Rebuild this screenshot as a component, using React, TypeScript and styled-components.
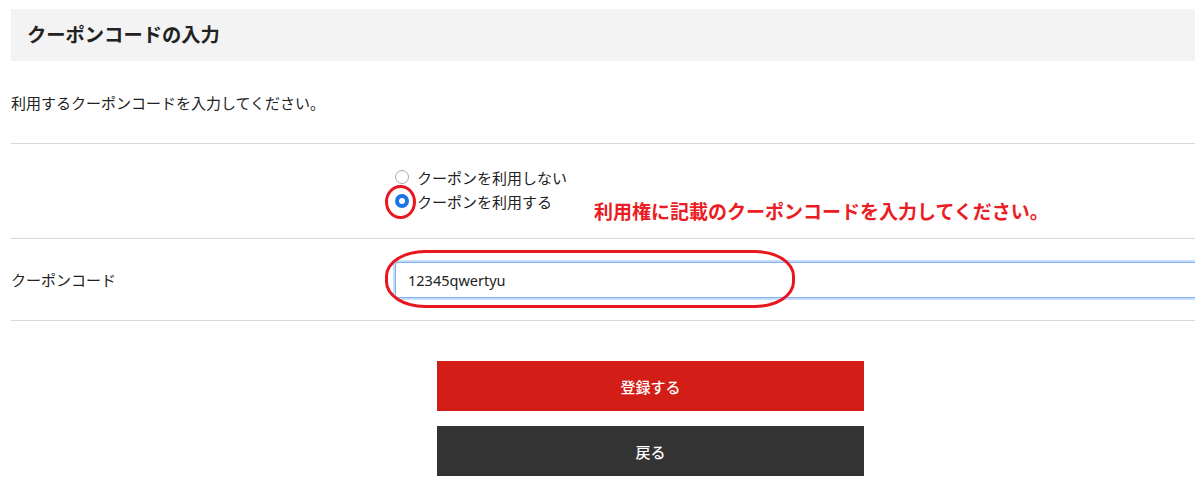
import React from "react";
import styled, { createGlobalStyle } from "styled-components";

const Global = createGlobalStyle`
  html, body { margin: 0; padding: 0; overflow: hidden; background: #fff; }
  body { font-family: "Noto Sans CJK JP", "Noto Sans", sans-serif; color: #222; }
`;

const Page = styled.div`
  width: 1279px;
  padding: 9px 0 0 11px;
`;

const Header = styled.div`
  height: 52px;
  background: #f3f3f3;
  display: flex;
  align-items: center;
  padding-left: 16px;
`;

const Title = styled.h2`
  margin: 0;
  font-size: 19.3px;
  font-weight: 700;
  color: #222;
  line-height: 1;
`;

const Desc = styled.p`
  margin: 30px 0 28px;
  font-size: 15px;
  line-height: 24px;
`;

const Table = styled.div`
  border-top: 1px solid #d9d9d9;
`;

const Row = styled.div<{ $pt: number; $pb: number }>`
  display: grid;
  grid-template-columns: 384px 1fr;
  align-items: center;
  padding: ${(p) => p.$pt}px 0 ${(p) => p.$pb}px;
  border-bottom: 1px solid #d9d9d9;
`;

const Label = styled.div`
  font-size: 15px;
  line-height: 24px;
`;

const Cell = styled.div`
  position: relative;
`;

const RadioLine = styled.label`
  display: flex;
  align-items: center;
  gap: 8px;
  height: 24px;
  font-size: 15px;
  cursor: pointer;
`;

const Radio = styled.input`
  appearance: none;
  margin: 0;
  width: 14px;
  height: 14px;
  border-radius: 50%;
  border: 1px solid #aaaaaa;
  background: #fff;
  box-sizing: border-box;
  &:checked {
    border: 4.5px solid #1a73e8;
  }
`;

const Note = styled.span`
  position: absolute;
  left: 199px;
  top: 34px;
  font-size: 19px;
  line-height: 24px;
  font-weight: 700;
  color: #ea1c24;
  white-space: nowrap;
`;

const Mark = styled.div<{ $l: number; $t: number; $w: number; $h: number; $r: string }>`
  position: absolute;
  left: ${(p) => p.$l}px;
  top: ${(p) => p.$t}px;
  width: ${(p) => p.$w}px;
  height: ${(p) => p.$h}px;
  border: 3px solid #e8161f;
  border-radius: ${(p) => p.$r};
  box-sizing: border-box;
  pointer-events: none;
`;

const Input = styled.input`
  display: block;
  width: 100%;
  height: 36px;
  box-sizing: border-box;
  padding: 0 12px;
  border: 1px solid #7fb1f3;
  border-radius: 3px;
  box-shadow: 0 0 0 2px #c6dcfb;
  font-family: "Noto Sans", "Noto Sans CJK JP", sans-serif;
  font-size: 14.5px;
  color: #222;
  outline: none;
`;

const Buttons = styled.div`
  display: flex;
  flex-direction: column;
  align-items: center;
  gap: 15px;
  margin-top: 40px;
`;

const Button = styled.button<{ $bg: string }>`
  width: 427px;
  height: 50px;
  border: none;
  background: ${(p) => p.$bg};
  color: #fff;
  font-family: "Noto Sans CJK JP", sans-serif;
  font-size: 15px;
  font-weight: 500;
  cursor: pointer;
`;

export default function App() {
  return (
    <>
      <Global />
      <Page>
        <Header>
          <Title>クーポンコードの入力</Title>
        </Header>
        <Desc>利用するクーポンコードを入力してください。</Desc>
        <Table>
          <Row $pt={21} $pb={25}>
            <Label />
            <Cell>
              <RadioLine>
                <Radio type="radio" name="use" />
                クーポンを利用しない
              </RadioLine>
              <RadioLine>
                <Radio type="radio" name="use" defaultChecked />
                クーポンを利用する
              </RadioLine>
              <Mark $l={-10} $t={20} $w={31} $h={34} $r="50%" />
              <Note>利用権に記載のクーポンコードを入力してください。</Note>
            </Cell>
          </Row>
          <Row $pt={23} $pb={22}>
            <Label>クーポンコード</Label>
            <Cell>
              <Input defaultValue="12345qwertyu" />
              <Mark $l={-10} $t={-12} $w={410} $h={58} $r="40px / 26px" />
            </Cell>
          </Row>
        </Table>
        <Buttons>
          <Button $bg="#d31d17">登録する</Button>
          <Button $bg="#333333">戻る</Button>
        </Buttons>
      </Page>
    </>
  );
}
